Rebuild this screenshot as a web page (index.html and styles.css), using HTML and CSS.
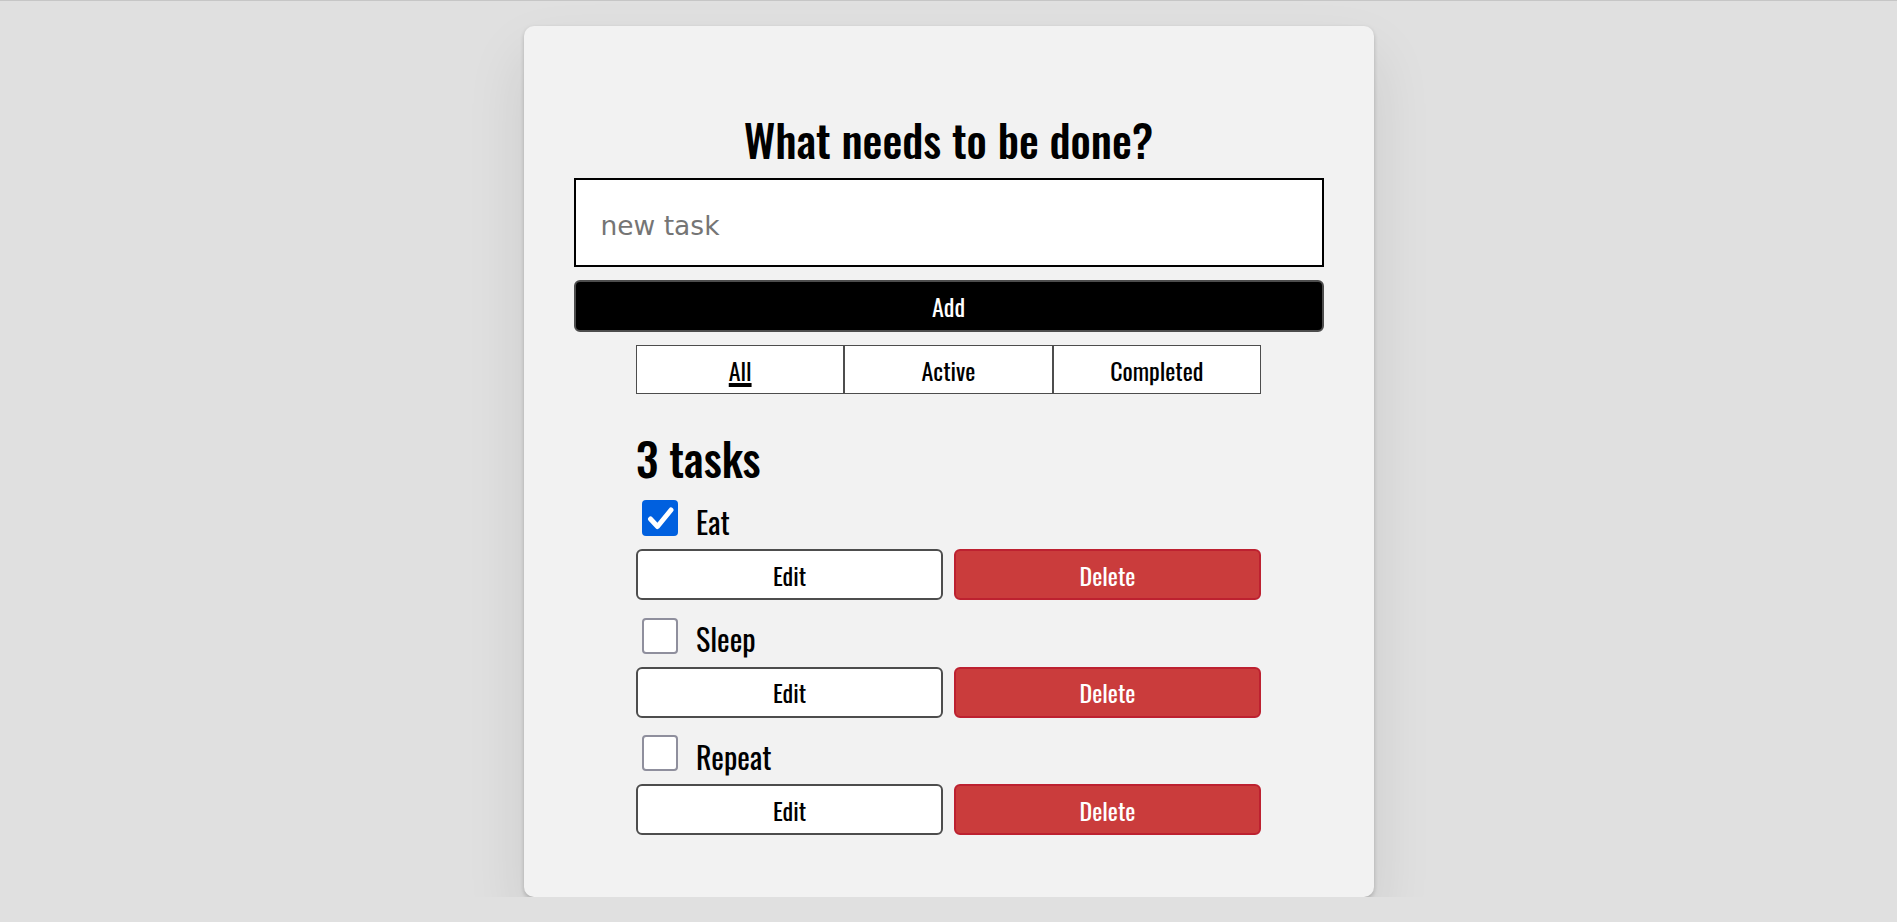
FILE: index.html
```html
<!DOCTYPE html>
<html lang="en">
<head>
<meta charset="utf-8">
<title>Todo</title>
<link rel="stylesheet" href="styles.css">
</head>
<body>
<main class="card">
  <form class="new-form">
    <h2 class="title"><label for="new-todo">What needs to be done?</label></h2>
    <input id="new-todo" class="new-input" type="text" placeholder="new task" autocomplete="off">
    <button type="button" class="btn btn-primary">Add</button>
  </form>

  <div class="filters">
    <button type="button" class="filter"><span class="current">All</span></button>
    <button type="button" class="filter">Active</button>
    <button type="button" class="filter">Completed</button>
  </div>

  <section class="list">
    <h2 class="count">3 tasks</h2>
    <ul class="todos">
      <li class="todo">
        <div class="todo-head">
          <span class="cb cb-checked"><svg viewBox="0 0 36 36" width="36" height="36"><path d="M8.5 19 L15.5 26.5 L29 10" fill="none" stroke="#fff" stroke-width="5" stroke-linecap="round" stroke-linejoin="round"/></svg></span>
          <label class="todo-label">Eat</label>
        </div>
        <div class="todo-btns">
          <button type="button" class="btn btn-edit">Edit</button>
          <button type="button" class="btn btn-danger">Delete</button>
        </div>
      </li>
      <li class="todo">
        <div class="todo-head">
          <span class="cb"></span>
          <label class="todo-label">Sleep</label>
        </div>
        <div class="todo-btns">
          <button type="button" class="btn btn-edit">Edit</button>
          <button type="button" class="btn btn-danger">Delete</button>
        </div>
      </li>
      <li class="todo">
        <div class="todo-head">
          <span class="cb"></span>
          <label class="todo-label">Repeat</label>
        </div>
        <div class="todo-btns">
          <button type="button" class="btn btn-edit">Edit</button>
          <button type="button" class="btn btn-danger">Delete</button>
        </div>
      </li>
    </ul>
  </section>
</main>
</body>
</html>
```

FILE: styles.css
```css
* {
  box-sizing: border-box;
}

html {
  background: #e0e0e0;
}

body {
  margin: 0;
  border-top: 1px solid #c6c6c6;
  background: #e0e0e0;
  color: #000;
  font-family: "Oswald", "Liberation Sans Narrow", "Arial Narrow", "DejaVu Sans Condensed", sans-serif;
}

.card {
  width: 850px;
  margin: 25px auto 0;
  padding: 88px 50px 62px;
  background: #f2f2f2;
  border-radius: 10px;
  box-shadow: 0 2px 4px 0 rgba(0, 0, 0, 0.2), 0 30px 60px 0 rgba(0, 0, 0, 0.1);
}

.new-form {
  display: flex;
  flex-direction: column;
}

.title {
  margin: 0;
  height: 50px;
  font-size: 44.5px;
  line-height: 50px;
  font-weight: 500;
  text-align: center;
}

.new-input {
  margin-top: 14px;
  height: 89px;
  width: 100%;
  border: 2px solid #000;
  border-radius: 0;
  background: #fff;
  padding: 5px 20px 0 25px;
  font-family: "DejaVu Sans", Verdana, sans-serif;
  font-size: 26.5px;
  color: #000;
  outline: none;
}

.new-input::placeholder {
  color: #757575;
}

.btn {
  display: flex;
  align-items: center;
  justify-content: center;
  padding: 0;
  border: 2px solid #4d4d4d;
  border-radius: 6px;
  font-family: inherit;
  font-size: 24px;
  color: #000;
  background: #fff;
  cursor: pointer;
}

.btn-primary {
  margin-top: 13px;
  height: 52px;
  width: 100%;
  background: #000;
  color: #fff;
}

.filters {
  width: 625px;
  height: 49px;
  margin: 13px auto 0;
  display: grid;
  grid-template-columns: repeat(3, 1fr);
}

.filter {
  display: flex;
  align-items: center;
  justify-content: center;
  padding: 0;
  border: 1px solid #4d4d4d;
  background: #fff;
  font-family: inherit;
  font-size: 24px;
  color: #000;
  cursor: pointer;
}

.current {
  text-decoration: underline;
  text-decoration-thickness: 4px;
  text-underline-offset: 2px;
}

.list {
  width: 625px;
  margin: 38px auto 0;
}

.count {
  margin: 0 0 16px;
  height: 52px;
  font-size: 45px;
  line-height: 52px;
  font-weight: 500;
}

.todos {
  list-style: none;
  margin: 0;
  padding: 0;
  display: flex;
  flex-direction: column;
  gap: 17.5px;
}

.todo {
  display: flex;
  flex-direction: column;
  gap: 13px;
}

.todo-head {
  display: flex;
  align-items: center;
  height: 36px;
  padding-left: 6px;
}

.cb {
  flex: none;
  width: 36px;
  height: 36px;
  border: 2px solid #8f8f9d;
  border-radius: 4px;
  background: #fff;
}

.cb-checked {
  border: none;
  background: #0060df;
}

.cb svg {
  display: block;
}

.todo-label {
  margin-left: 18px;
  padding-top: 6px;
  font-size: 30px;
}

.todo-btns {
  display: grid;
  grid-template-columns: 1fr 1fr;
  gap: 11px;
}

.todo-btns .btn {
  height: 51px;
}

.btn-danger {
  background: #ca3c3c;
  border-color: #bd2130;
  color: #fff;
}
```
